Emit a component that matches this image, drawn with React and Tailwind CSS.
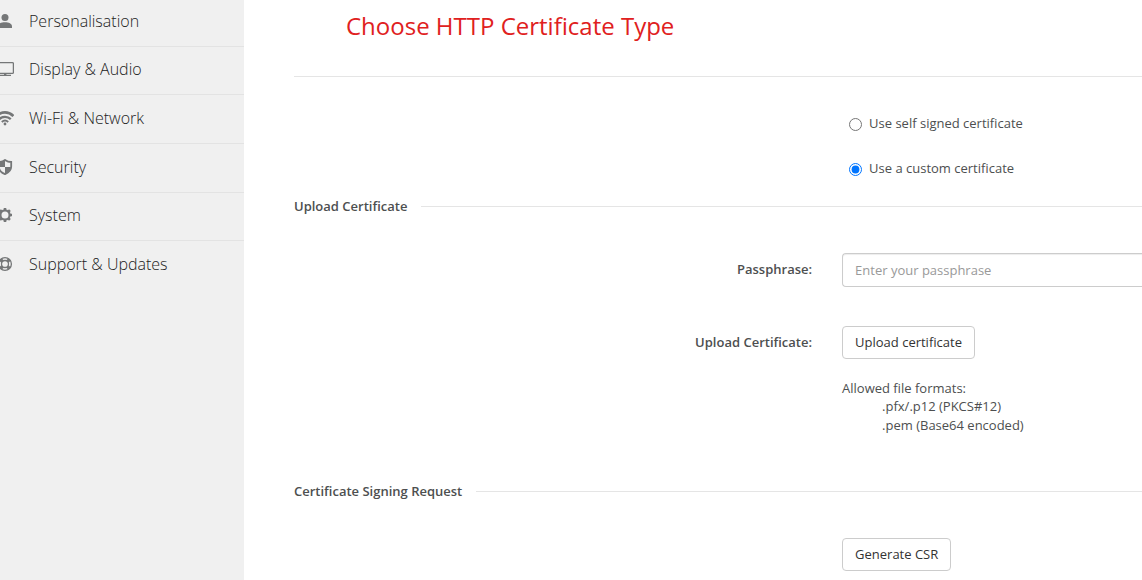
import { useState } from 'react';

function UserIcon() {
  return (
    <svg className="w-[18px] h-4 fill-current" viewBox="0 0 18 16" aria-hidden="true">
      <circle cx="9" cy="4.5" r="3.5" />
      <path d="M2 15v-1.6C2 10.6 5.2 9.2 9 9.2s7 1.4 7 4.2V15z" />
    </svg>
  );
}

function DisplayIcon() {
  return (
    <svg className="w-[18px] h-4 fill-current" viewBox="0 0 18 16" aria-hidden="true">
      <rect x="0.6" y="1.6" width="16.8" height="10.8" rx="1" fill="none" stroke="currentColor" strokeWidth="1.3" />
      <path d="M8 12.4h2.4v1.4H15v1.2H3v-1.2h5z" />
    </svg>
  );
}

function WifiIcon() {
  return (
    <svg className="w-[18px] h-4" viewBox="0 0 18 16" fill="none" stroke="currentColor" aria-hidden="true">
      <path d="M0.6 6C5.4 1.2 12.6 1.2 17.4 6" strokeWidth="2.8" />
      <path d="M3.2 9.2C6.6 6 11.4 6 14.8 9.2" strokeWidth="2.3" />
      <path d="M5.8 12c1.900-1.700 4.500-1.700 6.400 0" strokeWidth="2" />
      <circle cx="9" cy="14" r="1.4" fill="currentColor" stroke="none" />
    </svg>
  );
}

function ShieldIcon() {
  return (
    <svg className="w-[18px] h-4" viewBox="0 0 18 16" aria-hidden="true">
      <path d="M9 0.900c2 1.400 4 2.100 6.200 2.100v4.600c0 3.600-2.600 6.100-6.200 7.600-3.600-1.500-6.200-4-6.200-7.600V3C5 3 7 2.300 9 0.900z" fill="none" stroke="currentColor" strokeWidth="1.8" />
      <path d="M3 3c2.200 0 4.200-.7 6-2v7H3zM9 8h6c-.2 3.200-2.500 5.500-6 7z" fill="currentColor" />
    </svg>
  );
}

function GearIcon() {
  return (
    <svg className="w-[18px] h-4" viewBox="0 0 18 16" fill="none" stroke="currentColor" aria-hidden="true">
      <circle cx="9" cy="8" r="4.6" strokeWidth="2.2" />
      <path
        d="M9 1v2.500M9 12.500V15M2 8h2.500M13.500 8H16M4.050 3.050l1.600 1.600M12.350 11.350l1.600 1.600M13.950 3.050l-1.600 1.600M5.650 11.350l-1.600 1.600"
        strokeWidth="2.600"
      />
    </svg>
  );
}

function SupportIcon() {
  return (
    <svg className="w-[18px] h-4" viewBox="0 0 18 16" fill="none" stroke="currentColor" aria-hidden="true">
      <circle cx="9" cy="8" r="6.4" strokeWidth="1.3" />
      <circle cx="9" cy="8" r="3.5" strokeWidth="1.3" />
      <path d="M4.400 3.400l2.400 2.400M11.200 10.200l2.400 2.400M13.600 3.400l-2.400 2.400M6.800 10.200l-2.400 2.400" strokeWidth="3.400" />
    </svg>
  );
}

const menu = [
  { label: 'Personalisation',   icon: UserIcon },
  { label: 'Display & Audio',   icon: DisplayIcon },
  { label: 'Wi-Fi & Network',   icon: WifiIcon },
  { label: 'Security',          icon: ShieldIcon },
  { label: 'System',            icon: GearIcon },
  { label: 'Support & Updates', icon: SupportIcon },
];

function SectionHeading({ children }) {
  return (
    <div className="flex items-center gap-[14px]">
      <h2 className="font-semibold">{children}</h2>
      <div className="flex-1 border-t border-[#e5e5e5]" />
    </div>
  );
}

function Row({ label, htmlFor, children }) {
  return (
    <div className="grid grid-cols-[19fr_11fr] gap-[30px]">
      <div className="text-right pt-[7px]">
        {label && <label htmlFor={htmlFor} className="font-semibold">{label}</label>}
      </div>
      <div>{children}</div>
    </div>
  );
}

function Button({ children, ...props }) {
  return (
    <button type="button" className="block h-[33px] px-3 pb-[2px] border border-[#ccc] rounded bg-white text-[#333]" {...props}>
      {children}
    </button>
  );
}

export default function App() {
  const [type, setType] = useState('custom');
  const [passphrase, setPassphrase] = useState('');

  const types = [
    { value: 'self',   label: 'Use self signed certificate' },
    { value: 'custom', label: 'Use a custom certificate' },
  ];

  return (
    <div className="flex min-h-screen overflow-hidden bg-white text-[13px] leading-[18px] text-[#4d4f50] font-['Open_Sans',sans-serif]">
      <nav className="w-[244px] shrink-0 bg-[#f0f0f0] overflow-hidden">
        <ul className="grid grid-rows-6 h-[292px] -mt-[2px]">
          {menu.map(({ label, icon: Icon }) => (
            <li key={label} className="border-b border-[#e3e3e3] last:border-transparent">
              <a href="#" className="flex items-center gap-[15px] h-full -ml-1 pb-[2px] text-base font-light text-[#222]">
                <span className="text-[#757778]"><Icon /></span>
                {label}
              </a>
            </li>
          ))}
        </ul>
      </nav>

      <main className="flex-1 min-w-0 pl-[50px]">
        <h1 className="h-[77px] pt-[10px] pl-[52px] border-b border-[#e5e5e5] text-2xl leading-8 text-[#e02020]">
          Choose HTTP Certificate Type
        </h1>

        <div className="pt-[37px] pb-[18px]">
          <Row>
            <div className="flex flex-col gap-[25px] pl-[7px]">
              {types.map((t) => (
                <label key={t.value} className="flex items-center gap-[7px]">
                  <input
                    type="radio"
                    name="type"
                    className="w-[13px] h-[13px]"
                    checked={type === t.value}
                    onChange={() => setType(t.value)}
                  />
                  <span className="pb-[2px]">{t.label}</span>
                </label>
              ))}
            </div>
          </Row>
        </div>

        <SectionHeading>Upload Certificate</SectionHeading>

        <div className="flex flex-col gap-[39px] pt-[38px] pb-[47px]">
          <Row label="Passphrase:" htmlFor="passphrase">
            <input
              id="passphrase"
              type="password"
              value={passphrase}
              onChange={(e) => setPassphrase(e.target.value)}
              placeholder="Enter your passphrase"
              className="block w-full h-[34px] px-3 border border-r-0 border-[#ccc] rounded-l shadow-[inset_0_1px_1px_rgba(0,0,0,0.075)] placeholder:text-[#999]"
            />
          </Row>
          <Row label="Upload Certificate:" htmlFor="upload">
            <Button id="upload">Upload certificate</Button>
            <p className="pt-5">Allowed file formats:</p>
            <ul className="pl-10 leading-[19px]">
              <li>.pfx/.p12 (PKCS#12)</li>
              <li>.pem (Base64 encoded)</li>
            </ul>
          </Row>
        </div>

        <SectionHeading>Certificate Signing Request</SectionHeading>

        <div className="pt-[38px] pb-2">
          <Row>
            <Button>Generate CSR</Button>
          </Row>
        </div>
      </main>
    </div>
  );
}
